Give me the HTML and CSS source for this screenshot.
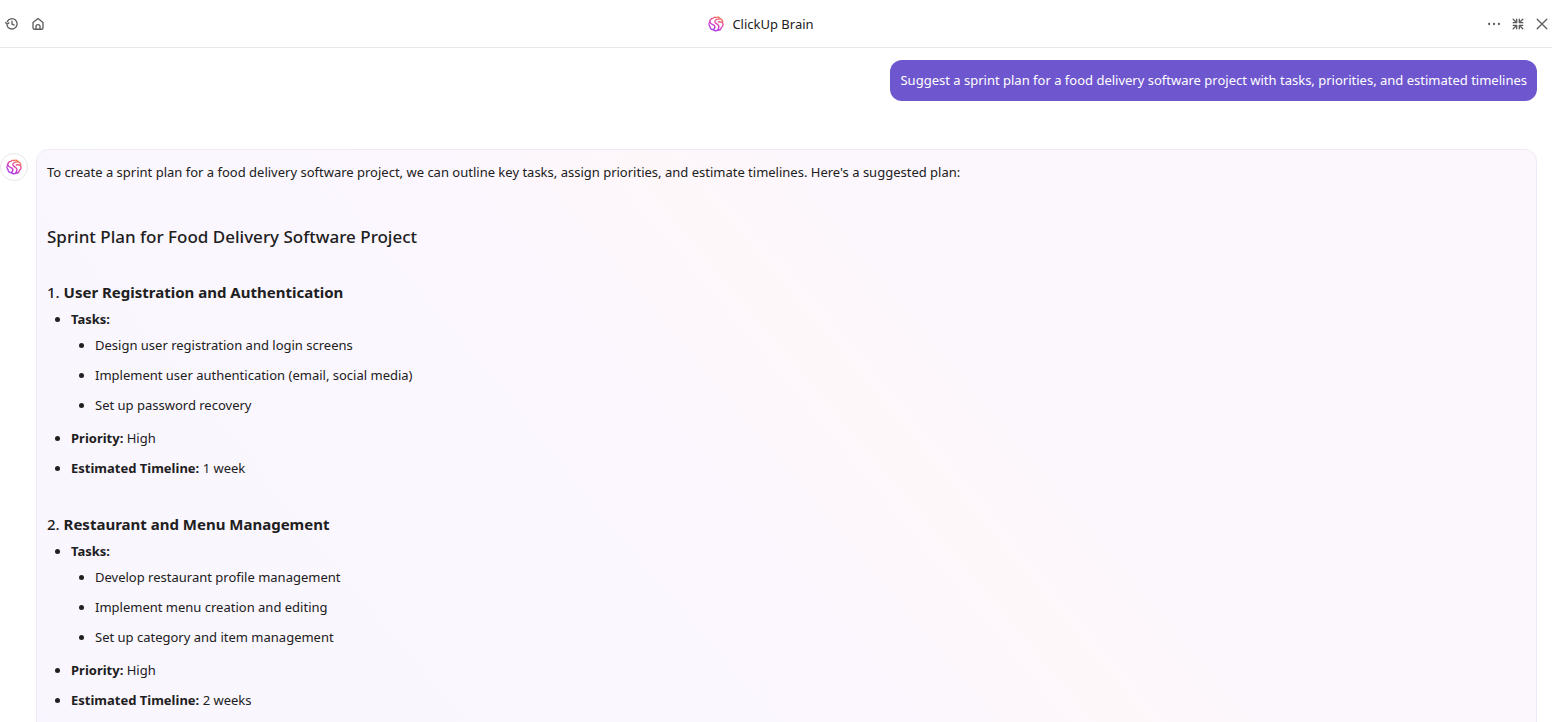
FILE: index.html
```html
<!DOCTYPE html>
<html lang="en">
<head>
    <meta charset="UTF-8">
    <meta name="viewport" content="width=device-width, initial-scale=1.0">
    <title>ClickUp Brain</title>
    <link rel="stylesheet" href="styles.css">
</head>
<body>
    <svg class="sprite" aria-hidden="true">
        <defs>
            <linearGradient id="brainGradient" gradientUnits="userSpaceOnUse" x1="12" y1="1" x2="4" y2="15">
                <stop offset="0" stop-color="#f8874f"/>
                <stop offset="0.35" stop-color="#ea4fa0"/>
                <stop offset="0.7" stop-color="#c436d8"/>
                <stop offset="1" stop-color="#9a40ea"/>
            </linearGradient>
        </defs>
        <symbol id="brain" viewBox="0 0 16 16">
            <g fill="none" stroke="url(#brainGradient)" stroke-width="1.4" stroke-linecap="round" stroke-linejoin="round">
                <path d="M8 1.6C9.4.8 11.5 1.1 12.2 2.8C14.1 3.2 15.1 5 14.5 6.7C15.3 8.4 14.9 10.5 13.3 11.5C13.2 13.3 11.6 14.5 9.8 13.9C8.6 15.1 6.4 15 5.3 13.6C3.3 13.8 1.9 12.3 2 10.4C.8 9.2.7 7.1 1.8 5.9C1.6 4 3 2.4 4.9 2.4C5.6 1.3 7 .9 8 1.6Z"/>
                <path d="M12.2 2.8C8 3 6.2 4.6 7 6.3C7.8 8 10.6 8.2 10.9 10.4C11 11.8 10.4 13 9.8 13.9M1.8 5.9C2.6 8.6 6 8.4 6.7 10C7.3 11.5 6.4 12.8 5.3 13.6M14.5 6.7C13.2 5.7 11.6 5.6 10.4 6"/>
            </g>
        </symbol>
    </svg>

    <header class="topbar">
        <div class="actions actions-left">
            <button type="button" class="icon-btn" aria-label="History">
                <svg viewBox="0 0 16 16">
                    <path d="M2.6 5.3A5.9 5.9 0 1 1 2.2 9.2M.8 6.4L2.4 8.2L4.5 6.7M8 4.8V8.2L10.4 9.2"/>
                </svg>
            </button>
            <button type="button" class="icon-btn" aria-label="Home">
                <svg viewBox="0 0 16 16">
                    <path d="M2.3 6.3L8 1.8L13.7 6.3V12.7Q13.7 14 12.4 14H3.6Q2.3 14 2.3 12.7ZM5.7 14V11A2.3 2.3 0 0 1 10.3 11V14"/>
                </svg>
            </button>
        </div>
        <div class="title">
            <svg class="brain"><use href="#brain"/></svg>
            <span>ClickUp Brain</span>
        </div>
        <div class="actions">
            <button type="button" class="icon-btn" aria-label="More">
                <svg viewBox="0 0 16 16" class="dots">
                    <circle cx="2.4" cy="8" r="1.3"/>
                    <circle cx="8" cy="8" r="1.3"/>
                    <circle cx="13.6" cy="8" r="1.3"/>
                </svg>
            </button>
            <button type="button" class="icon-btn" aria-label="Collapse">
                <svg viewBox="0 0 16 16">
                    <path d="M2.5 2.5L6.3 6.3M2.5 6.5H6.5V2.5M13.5 2.5L9.7 6.3M9.5 2.5V6.5H13.5M2.5 13.5L6.3 9.7M2.5 9.5H6.5V13.5M13.5 13.5L9.7 9.7M9.5 13.5V9.5H13.5"/>
                </svg>
            </button>
            <button type="button" class="icon-btn" aria-label="Close">
                <svg viewBox="0 0 16 16">
                    <path d="M2.5 2.5L13.5 13.5M13.5 2.5L2.5 13.5"/>
                </svg>
            </button>
        </div>
    </header>

    <main class="chat">
        <p class="prompt">Suggest a sprint plan for a food delivery software project with tasks, priorities, and estimated timelines</p>

        <div class="reply">
            <div class="avatar">
                <svg class="brain"><use href="#brain"/></svg>
            </div>
            <article class="answer">
                <p>To create a sprint plan for a food delivery software project, we can outline key tasks, assign priorities, and estimate timelines. Here's a suggested plan:</p>

                <h2>Sprint Plan for Food Delivery Software Project</h2>

                <h3>1. <strong>User Registration and Authentication</strong></h3>
                <ul>
                    <li><strong>Tasks:</strong>
                        <ul>
                            <li>Design user registration and login screens</li>
                            <li>Implement user authentication (email, social media)</li>
                            <li>Set up password recovery</li>
                        </ul>
                    </li>
                    <li><strong>Priority:</strong> High</li>
                    <li><strong>Estimated Timeline:</strong> 1 week</li>
                </ul>

                <h3>2. <strong>Restaurant and Menu Management</strong></h3>
                <ul>
                    <li><strong>Tasks:</strong>
                        <ul>
                            <li>Develop restaurant profile management</li>
                            <li>Implement menu creation and editing</li>
                            <li>Set up category and item management</li>
                        </ul>
                    </li>
                    <li><strong>Priority:</strong> High</li>
                    <li><strong>Estimated Timeline:</strong> 2 weeks</li>
                </ul>
            </article>
        </div>
    </main>
</body>
</html>
```
FILE: styles.css
```css
:root {
    --text-color: #202020;
    --icon-color: #5c5c5c;
    --primary-color: #6e56cf;
    --border-color: #e8e8e8;
}

* {
    box-sizing: border-box;
}

body {
    display: flex;
    flex-direction: column;
    height: 100vh;
    margin: 0;
    font-family: 'Noto Sans', 'Open Sans', sans-serif;
    font-size: 13px;
    line-height: 22px;
    color: var(--text-color);
    background-color: #ffffff;
}

p, h2, h3, ul {
    margin: 0;
}

.sprite {
    position: absolute;
    width: 0;
    height: 0;
}

/* Top bar */
.topbar {
    display: flex;
    flex-shrink: 0;
    align-items: center;
    justify-content: space-between;
    height: 48px;
    border-bottom: 1px solid var(--border-color);
}

.actions {
    display: flex;
    gap: 4px;
}

.actions-left {
    gap: 6px;
    padding-left: 2px;
}

.icon-btn {
    display: flex;
    align-items: center;
    justify-content: center;
    width: 20px;
    height: 20px;
    padding: 0;
    border: none;
    background: none;
    cursor: pointer;
}

.icon-btn svg {
    width: 14px;
    height: 14px;
    fill: none;
    stroke: var(--icon-color);
    stroke-width: 1.5;
    stroke-linecap: round;
    stroke-linejoin: round;
}

.icon-btn .dots {
    fill: var(--icon-color);
    stroke: none;
}

.title {
    display: flex;
    align-items: center;
    gap: 8px;
    margin-right: 10px;
}

.brain {
    width: 16px;
    height: 16px;
}

/* Conversation */
.chat {
    display: flex;
    flex: 1;
    flex-direction: column;
    gap: 48px;
    min-height: 0;
    padding: 12px 15px 0 0;
    overflow-y: auto;
    scrollbar-width: none;
}

.prompt {
    align-self: flex-end;
    padding: 9px 10px 10px;
    border-radius: 12px;
    color: #ffffff;
    background-color: var(--primary-color);
}

.reply {
    display: flex;
    align-items: flex-start;
    gap: 8px;
}

.avatar {
    display: flex;
    flex-shrink: 0;
    align-items: center;
    justify-content: center;
    width: 28px;
    height: 28px;
    margin-top: 4px;
    border: 1px solid var(--border-color);
    border-radius: 50%;
}

.answer {
    flex: 1;
    padding: 11px 10px 24px;
    border: 1px solid #efeaf6;
    border-radius: 12px;
    background: linear-gradient(50deg, #f9f6ff 0%, #fcf7fe 45%, #fef7fa 55%, #fcf7fd 64%, #fbf7fd 100%);
}

.answer h2 {
    margin-top: 40px;
    font-size: 17px;
    font-weight: 500;
    line-height: 28px;
}

.answer h3 {
    margin-top: 29px;
    font-size: 15px;
    font-weight: 500;
    line-height: 24px;
}

.answer ul + h3 {
    margin-top: 33px;
}

.answer ul {
    margin-top: 4px;
    padding-left: 24px;
    list-style: disc;
}

.answer li + li {
    margin-top: 8px;
}

.answer li ul {
    margin-bottom: 11px;
}
```
